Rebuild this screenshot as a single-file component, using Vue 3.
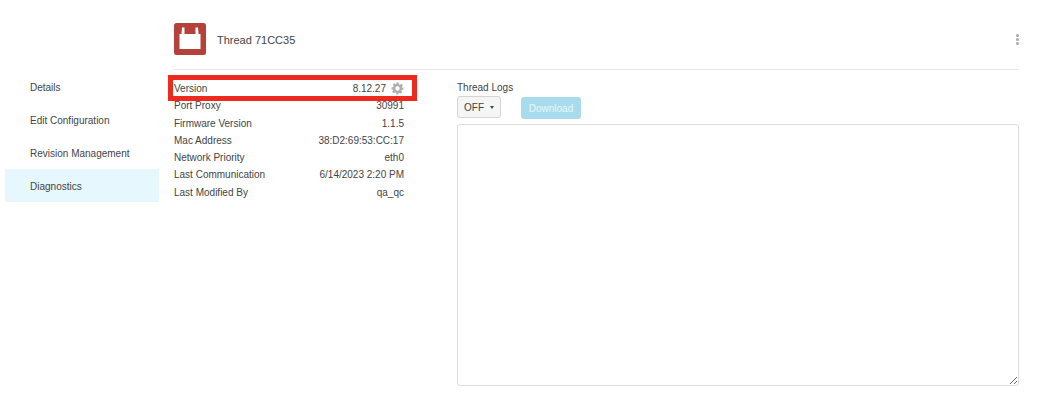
<script setup>
const nav = [
  { label: 'Details', active: false },
  { label: 'Edit Configuration', active: false },
  { label: 'Revision Management', active: false },
  { label: 'Diagnostics', active: true },
]
const rows = [
  ['Port Proxy', '30991'],
  ['Firmware Version', '1.1.5'],
  ['Mac Address', '38:D2:69:53:CC:17'],
  ['Network Priority', 'eth0'],
  ['Last Communication', '6/14/2023 2:20 PM'],
  ['Last Modified By', 'qa_qc'],
]
</script>

<template>
  <div class="page">
    <aside class="side">
      <a v-for="n in nav" :key="n.label" class="nav" :class="{ active: n.active }">{{ n.label }}</a>
    </aside>
    <main class="main">
      <header class="head">
        <svg class="logo" width="32" height="32" viewBox="0 0 32 32">
          <rect width="32" height="32" rx="2.5" fill="#b5423a" />
          <path d="M5.500 11h2L8 4.500h2.500V11h11V4.500H24l.5 6.500h2V26H5.500z" fill="#fff" />
        </svg>
        <span class="title">Thread 71CC35</span>
        <span class="kebab"><i></i><i></i><i></i></span>
      </header>
      <div class="body">
        <section class="info">
          <div class="row version">
            <span>Version</span>
            <span class="val">
              8.12.27
              <svg class="gear" width="13" height="13" viewBox="0 0 24 24">
                <path fill="#b0b0b0" fill-rule="evenodd" d="M10 1h4l.6 3.100 1.900.8 2.600-1.800 2.800 2.800-1.800 2.600.8 1.900L23 10v4l-3.100.6-.8 1.900 1.800 2.600-2.800 2.800-2.600-1.800-1.900.8L14 23h-4l-.6-3.100-1.900-.8-2.600 1.800-2.800-2.800 1.800-2.600-.8-1.900L1 14v-4l3.100-.6.8-1.900-1.800-2.600 2.800-2.800 2.600 1.800 1.900-.8zM12 8a4 4 0 1 0 0 8 4 4 0 0 0 0-8z" />
              </svg>
            </span>
            <div class="mark"></div>
          </div>
          <div v-for="r in rows" :key="r[0]" class="row">
            <span>{{ r[0] }}</span>
            <span>{{ r[1] }}</span>
          </div>
        </section>
        <section class="logs">
          <label class="logs-label">Thread Logs</label>
          <div class="controls">
            <button class="off">OFF<span class="caret"></span></button>
            <button class="download">Download</button>
          </div>
          <textarea class="area"></textarea>
        </section>
      </div>
    </main>
  </div>
</template>

<style>
html, body { margin: 0; background: #fff; }
</style>

<style scoped>
.page {
  width: 1045px;
  height: 400px;
  display: flex;
  box-sizing: border-box;
  padding: 0 26px 0 5px;
  overflow: hidden;
  font-family: "Liberation Sans", Arial, sans-serif;
  font-size: 10px;
  color: #444;
}
.side {
  width: 154px;
  flex: none;
  padding-top: 70px;
  box-sizing: border-box;
}
.nav {
  display: flex;
  align-items: center;
  height: 33px;
  box-sizing: border-box;
  padding: 1px 0 0 25px;
}
.nav.active { background: #e6f8fd; }
.main {
  margin-left: 15px;
  flex: 1;
  min-width: 0;
  display: flex;
  flex-direction: column;
}
.head {
  box-sizing: border-box;
  padding-top: 23px;
  display: flex;
  align-items: flex-start;
  border-bottom: 1px solid #e6e6e6;
  height: 70px;
}
.logo { flex: none; }
.title {
  margin-left: 11px;
  line-height: 34px;
  font-size: 11px;
}
.kebab {
  margin-left: auto;
  margin-top: 11px;
  display: flex;
  flex-direction: column;
  gap: 1px;
}
.kebab i {
  display: block;
  width: 3px;
  height: 3px;
  border-radius: 50%;
  background: #a8a8a8;
}
.body {
  flex: 1;
  display: flex;
}
.info {
  width: 230px;
  flex: none;
  padding-top: 9.7px;
}
.row {
  position: relative;
  display: flex;
  justify-content: space-between;
  align-items: center;
  height: 17.33px;
}
.val {
  display: flex;
  align-items: center;
  gap: 5px;
}
.gear { flex: none; }
.mark {
  position: absolute;
  left: -6px;
  right: -13px;
  top: -4.7px;
  height: 26px;
  box-sizing: border-box;
  border: 5px solid #ee2a1f;
  pointer-events: none;
}
.logs {
  margin-left: 53px;
  flex: 1;
  min-width: 0;
  padding-top: 11px;
  display: flex;
  flex-direction: column;
}
.logs-label {
  line-height: 14px;
  margin-bottom: 1px;
}
.controls {
  display: flex;
  align-items: flex-start;
  gap: 20px;
}
button {
  font: inherit;
  border-radius: 3px;
  box-sizing: border-box;
  padding: 0;
}
.off {
  width: 44px;
  height: 22px;
  border: 1px solid #d4d4d4;
  background: #f5f5f5;
  color: #444;
  display: flex;
  align-items: center;
  padding-left: 6px;
}
.caret {
  margin-left: 6px;
  width: 0;
  height: 0;
  border-left: 2.500px solid transparent;
  border-right: 2.500px solid transparent;
  border-top: 3px solid #444;
}
.download {
  width: 60px;
  height: 22px;
  margin-top: 1px;
  border: none;
  background: #a8dcec;
  color: #e9f7fb;
}
.area {
  margin-top: 5px;
  height: 262px;
  width: 100%;
  box-sizing: border-box;
  border: 1px solid #dcdcdc;
  border-radius: 3px;
  background: #fff;
  display: block;
  outline: none;
}
</style>
